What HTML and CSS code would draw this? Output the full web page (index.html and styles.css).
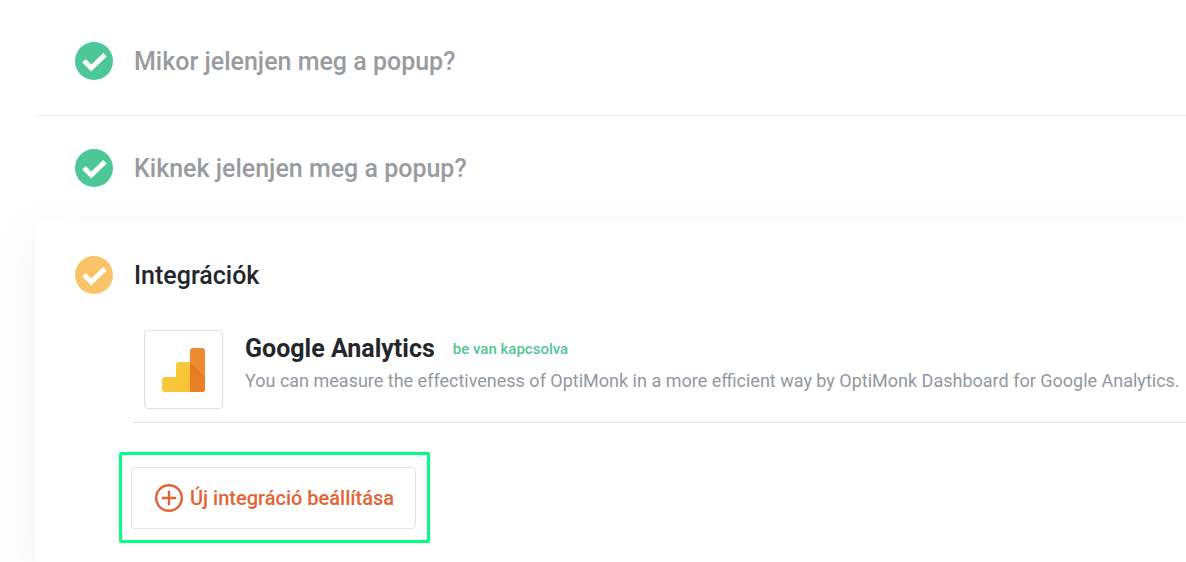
FILE: index.html
```
<!DOCTYPE html>
<html lang="hu">
<head>
  <meta charset="UTF-8" />
  <meta name="viewport" content="width=device-width, initial-scale=1.0"/>
  <title>Integrációk</title>
  <link rel="stylesheet" href="styles.css">
</head>
<body>
  <main class="settings">
    <section class="step">
      <svg class="step-icon" viewBox="0 0 38 38" aria-hidden="true">
        <circle cx="19" cy="19" r="19" />
        <path d="M9 18.7 L16.2 26 L30 12.7" />
      </svg>
      <h2>Mikor jelenjen meg a popup?</h2>
    </section>

    <section class="step step-last">
      <svg class="step-icon" viewBox="0 0 38 38" aria-hidden="true">
        <circle cx="19" cy="19" r="19" />
        <path d="M9 18.7 L16.2 26 L30 12.7" />
      </svg>
      <h2>Kiknek jelenjen meg a popup?</h2>
    </section>

    <section class="panel">
      <div class="panel-header">
        <svg class="step-icon active" viewBox="0 0 38 38" aria-hidden="true">
          <circle cx="19" cy="19" r="19" />
          <path d="M9 18.7 L16.2 26 L30 12.7" />
        </svg>
        <h2>Integrációk</h2>
      </div>

      <div class="integration">
        <div class="logo">
          <svg width="43" height="44" viewBox="0 0 43 44" aria-hidden="true">
            <defs>
              <linearGradient id="yellow" x1="0" y1="0" x2="1" y2="1">
                <stop offset="0" stop-color="#f9cc41" />
                <stop offset="1" stop-color="#f8c132" />
              </linearGradient>
              <linearGradient id="shade" x1="0" y1="0" x2="0" y2="1">
                <stop offset="0" stop-color="#e57c26" />
                <stop offset="1" stop-color="#e98024" />
              </linearGradient>
            </defs>
            <path fill="url(#yellow)" d="M29 14H17a3 3 0 0 0-3 3v12H3a3 3 0 0 0-3 3v9a3 3 0 0 0 3 3h26z" />
            <path fill="#ed8b31" d="M31 0h9a3 3 0 0 1 3 3v38a3 3 0 0 1-3 3H28V3a3 3 0 0 1 3-3z" />
            <path fill="url(#shade)" d="M28 14l15 15v12a3 3 0 0 1-3 3H28z" />
          </svg>
        </div>
        <div class="info">
          <div class="info-title">
            <h3>Google Analytics</h3>
            <span class="status">be van kapcsolva</span>
          </div>
          <p>You can measure the effectiveness of OptiMonk in a more efficient way by OptiMonk Dashboard for Google Analytics.</p>
        </div>
      </div>

      <div class="highlight">
        <button type="button" class="add-button">
          <svg width="28" height="28" viewBox="0 0 28 28" aria-hidden="true">
            <circle cx="14" cy="14" r="12.8" />
            <path d="M14 7.8v12.4M7.8 14h12.4" />
          </svg>
          Új integráció beállítása
        </button>
      </div>
    </section>
  </main>
</body>
</html>
```

FILE: styles.css
```
* {
  box-sizing: border-box;
}
body {
  font-family: Roboto, sans-serif;
  margin: 0;
  background: white;
  color: #23262a;
  overflow-x: hidden;
}
h2, h3, p {
  margin: 0;
}
h2 {
  font-size: 25px;
  line-height: 40px;
  font-weight: 500;
}
.settings {
  padding: 9px 0 0 35px;
}
.step {
  display: flex;
  gap: 21px;
  margin-left: 2px;
  padding: 33px 38px;
  border-bottom: 1px solid #ebebeb;
  color: #999c9f;
}
.step-last {
  padding-bottom: 32px;
  border-bottom: none;
}
.step-icon {
  flex: none;
  width: 38px;
  height: 38px;
  fill: #4bc798;
}
.step-icon.active {
  fill: #f9c468;
}
.step-icon path {
  fill: none;
  stroke: white;
  stroke-width: 5;
}
.panel {
  position: relative;
  margin-right: -40px;
  padding: 35px 40px 19px;
  background: white;
  border-radius: 4px;
  box-shadow: 0 16px 48px rgba(60, 75, 110, 0.08);
}
.panel-header {
  display: flex;
  gap: 21px;
}
.integration {
  display: flex;
  gap: 22px;
  margin: 34px 0 0 57px;
  padding: 0 0 13px 12px;
  border-bottom: 1px solid #dfe1e3;
}
.logo {
  display: flex;
  flex: none;
  align-items: center;
  justify-content: center;
  width: 79px;
  height: 79px;
  border: 1px solid #dcdddf;
  border-radius: 4px;
}
.info {
  padding-top: 3px;
}
.info-title {
  display: flex;
  align-items: center;
  gap: 18px;
}
.info h3 {
  font-size: 25px;
  line-height: 32px;
  font-weight: 700;
}
.status {
  color: #54c596;
  font-size: 15px;
  font-weight: 500;
}
.info p {
  color: #92989f;
  font-size: 18px;
  line-height: 32px;
}
.highlight {
  width: fit-content;
  margin: 29px 0 0 44px;
  padding: 12px 11px 11px 9px;
  border: 3px solid #00ff83;
  border-radius: 2px;
}
.add-button {
  display: flex;
  align-items: center;
  gap: 7px;
  height: 62px;
  padding: 0 21px 0 23px;
  border: 1px solid #e2e3e5;
  border-radius: 4px;
  background: white;
  color: #e36333;
  font-family: inherit;
  font-size: 20px;
  font-weight: 500;
  cursor: pointer;
}
.add-button svg {
  fill: none;
  stroke: #e36333;
  stroke-width: 2.4;
  stroke-linecap: round;
}
```
